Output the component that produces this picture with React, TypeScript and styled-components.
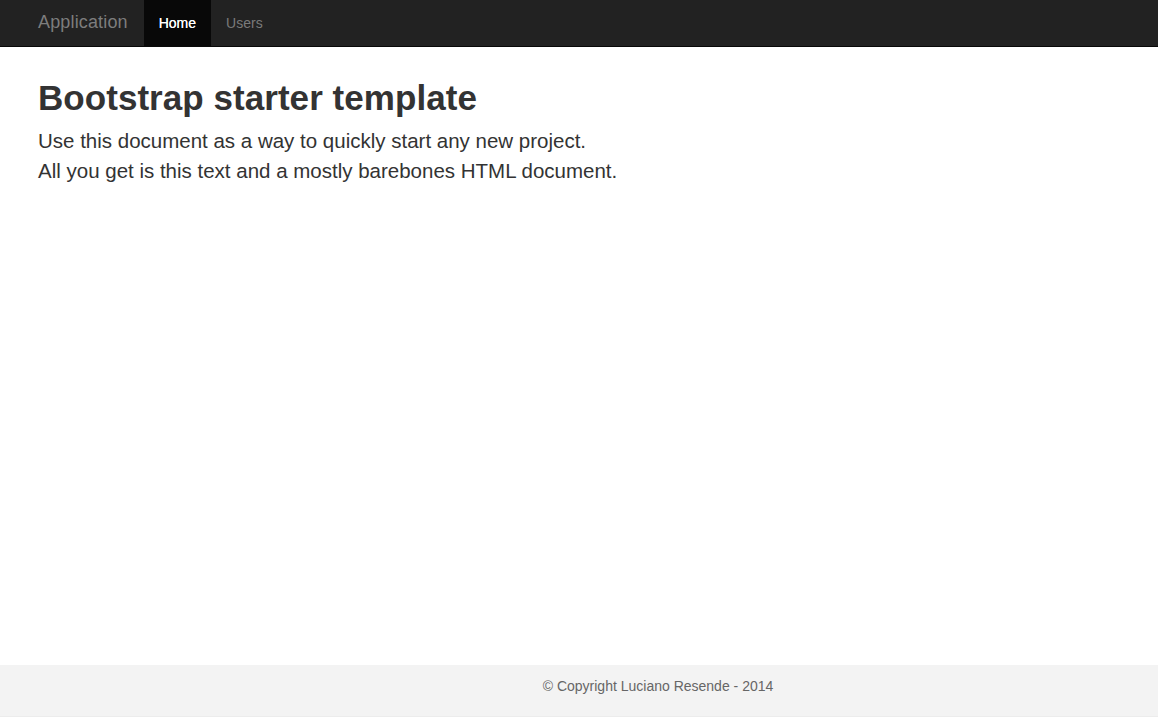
import React from "react";
import styled, { createGlobalStyle } from "styled-components";

const GlobalStyle = createGlobalStyle`
  html, body { margin: 0; padding: 0; }
  body {
    font-family: "Liberation Sans", Arial, Helvetica, sans-serif;
    color: #333;
    background: #fff;
  }
  * { box-sizing: border-box; }
`;

const Page = styled.div`
  min-height: 100vh;
  display: flex;
  flex-direction: column;
`;

const Navbar = styled.nav`
  height: 47px;
  background: #222;
  border-bottom: 1px solid #080808;
  display: flex;
  align-items: stretch;
  padding-left: 38px;
`;

const Brand = styled.a`
  display: flex;
  align-items: center;
  font-size: 18px;
  letter-spacing: 0.15px;
  color: #7d7d7d;
  text-decoration: none;
  margin-right: 16px;
  padding-bottom: 1px;
`;

const NavList = styled.ul`
  display: flex;
  list-style: none;
  margin: 0;
  padding: 0;
`;

const NavItem = styled.li<{ $active?: boolean }>`
  display: flex;
  align-items: center;
  padding: 0 15px 1px;
  font-size: 14px;
  background: ${(p) => (p.$active ? "#080808" : "transparent")};
  color: ${(p) => (p.$active ? "#fff" : "#7a7a7a")};
  text-shadow: ${(p) => (p.$active ? "0 0 0.4px #fff" : "none")};
`;

const Main = styled.main`
  flex: 1;
  padding: 32px 38px 0;
`;

const Title = styled.h1`
  margin: 0 0 9px;
  font-size: 35px;
  line-height: 38px;
  font-weight: bold;
  letter-spacing: 0.05px;
  color: #333;
`;

const Lead = styled.p`
  margin: 0;
  font-size: 20.5px;
  line-height: 30px;
  font-weight: 300;
  color: #333;
`;

const Footer = styled.footer`
  height: 52px;
  background: #f3f3f3;
  padding: 11px 0 0 158px;
  text-align: center;
  font-size: 14px;
  line-height: 20px;
  color: #666;
  border-bottom: 1px solid #ececec;
`;

export default function App() {
  return (
    <>
      <GlobalStyle />
      <Page>
        <Navbar>
          <Brand href="#">Application</Brand>
          <NavList>
            <NavItem $active>Home</NavItem>
            <NavItem>Users</NavItem>
          </NavList>
        </Navbar>
        <Main>
          <Title>Bootstrap starter template</Title>
          <Lead>
            Use this document as a way to quickly start any new project.
            <br />
            All you get is this text and a mostly barebones HTML document.
          </Lead>
        </Main>
        <Footer>© Copyright Luciano Resende - 2014</Footer>
      </Page>
    </>
  );
}
